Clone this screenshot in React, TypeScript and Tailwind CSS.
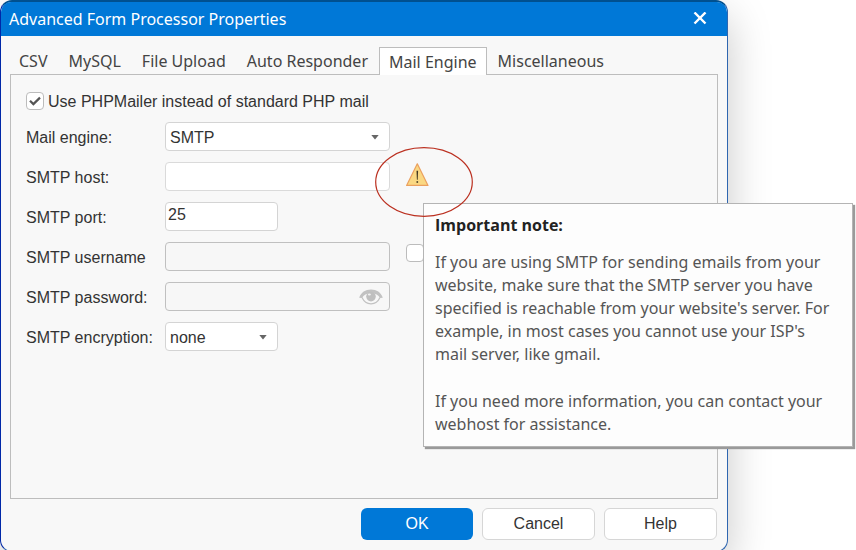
import { useState, type ReactNode } from "react";

const TABS = ["CSV", "MySQL", "File Upload", "Auto Responder", "Mail Engine", "Miscellaneous"];

const uiFont = "font-['Noto_Sans','Open_Sans',sans-serif]";
const formFont = "font-['Liberation_Sans',Arial,sans-serif]";

function CheckBox({ id, defaultChecked, label }: { id: string; defaultChecked?: boolean; label?: string }) {
  return (
    <span className="grid size-[18px] shrink-0 place-items-center">
      <input
        id={id}
        type="checkbox"
        defaultChecked={defaultChecked}
        aria-label={label}
        className="peer col-start-1 row-start-1 size-[18px] appearance-none rounded-sm border border-[#bcbcbc] bg-white"
      />
      <svg
        viewBox="0 0 18 18"
        className="pointer-events-none col-start-1 row-start-1 hidden size-[18px] peer-checked:block"
        fill="none"
        stroke="#555555"
        strokeWidth="2.2"
      >
        <path d="M4 8.7 L7.4 12.1 L14 5.6" />
      </svg>
    </span>
  );
}

function Row({ id, label, children }: { id: string; label: string; children: ReactNode }) {
  return (
    <div className="flex h-[29px] items-center">
      <label htmlFor={id} className="w-[139px] shrink-0 pt-0.5">
        {label}
      </label>
      {children}
    </div>
  );
}

function Select({ id, options, wide }: { id: string; options: string[]; wide?: boolean }) {
  return (
    <span className={`grid items-center ${wide ? "w-[225px]" : "w-[113px]"}`}>
      <select
        id={id}
        className="col-start-1 row-start-1 h-[29px] w-full appearance-none rounded-sm border border-[#d4d4d4] bg-white px-1 pt-0.5 text-[#333333]"
      >
        {options.map((o) => (
          <option key={o}>{o}</option>
        ))}
      </select>
      <svg viewBox="0 0 8 5" className="pointer-events-none col-start-1 row-start-1 mt-0.5 mr-[11px] h-[5px] w-2 justify-self-end" fill="#666666">
        <path d="M0.3 0 H7.7 L4 4.6 Z" />
      </svg>
    </span>
  );
}

function WarningNote() {
  return (
    <div className="relative ml-4 size-6 self-start">
      <svg viewBox="0 0 24 24" className="size-6" role="img" aria-label="Warning">
        <path d="M11.3 1.8 L22 23.4 H0.6 Z" fill="#fad883" stroke="#eba05f" strokeWidth="1.2" strokeLinejoin="round" />
        <path d="M10.5 8.8 H12.1 L11.7 17.8 H10.9 Z" fill="#3f3520" />
        <rect x="10.5" y="19.2" width="1.6" height="1.6" fill="#3f3520" />
      </svg>
      <div
        role="tooltip"
        className={`absolute top-[41px] left-[17px] z-10 w-[430px] border border-[#b4b4b4] bg-[#fdfdfd] px-[11px] pt-2 pb-[10px] text-base text-[#555555] shadow-[2px_2px_1px_#9a9a9a] ${uiFont}`}
      >
        <h2 className="font-['Open_Sans','Noto_Sans',sans-serif] leading-[26px] font-bold text-[#222222]">
          Important note:
        </h2>
        <p className="mt-[13px] leading-[23px]">
          If you are using SMTP for sending emails from your website, make sure that the SMTP server you have specified
          is reachable from your website's server. For example, in most cases you cannot use your ISP's mail server,
          like gmail.
        </p>
        <p className="mt-6 leading-[23px]">
          If you need more information, you can contact your webhost for assistance.
        </p>
      </div>
      <svg
        viewBox="0 0 98 70"
        className="pointer-events-none absolute top-[-15px] left-[-31px] z-20 h-[70px] w-[98px] max-w-none"
        fill="none"
        stroke="#bb3020"
        strokeWidth="1.2"
      >
        <ellipse cx="49" cy="35" rx="48.3" ry="34.3" />
      </svg>
    </div>
  );
}

function EyeIcon() {
  return (
    <svg viewBox="0 0 24 16" className="h-4 w-6">
      <path
        d="M3 8.5 C5 12.8 8.5 14.8 12 14.8 C15.5 14.8 19 12.8 21 8.5"
        fill="#f8f8f8"
        stroke="#c2c2c2"
        strokeWidth="1.2"
      />
      <path
        d="M0.2 8.8 C2 3.4 6.5 0.6 12 0.6 C17.5 0.6 22 3.4 23.8 8.8 L21 9 C19.5 6 16.500 4.2 12 4.2 C7.5 4.2 4.5 6 3 9 Z"
        fill="#c2c2c2"
      />
      <circle cx="12" cy="7.6" r="4.8" fill="#bfbfbf" />
      <ellipse cx="10.4" cy="5.6" rx="1.5" ry="1" fill="#f2f2f2" />
    </svg>
  );
}

export default function App() {
  const [active, setActive] = useState("Mail Engine");
  return (
    <div className="h-screen overflow-hidden bg-white">
      <main className="mr-32 flex min-h-[calc(100vh+2px)] flex-col rounded-[12px] border border-t-2 border-[#2f66b0] border-t-[#00508f] border-l-[#0028a8] bg-[#f8f8f8] shadow-[0_16px_44px_rgba(0,0,0,0.22)]">
        <header className="flex h-[34px] shrink-0 items-center justify-between rounded-t-[10px] bg-[#0078d7] pr-5 pl-[8px] text-white">
          <h1 className={`text-base ${uiFont}`}>Advanced Form Processor Properties</h1>
          <button aria-label="Close">
            <svg viewBox="0 0 14 14" className="size-[14px]" stroke="white" strokeWidth="2.4">
              <path d="M1.5 0.5 L12.5 11.5 M12.5 0.5 L1.5 11.5" />
            </svg>
          </button>
        </header>

        <div role="tablist" className={`mt-[11px] flex h-[27px] shrink-0 gap-px px-2 text-base text-[#444444] ${uiFont}`}>
          {TABS.map((tab) => (
            <button
              key={tab}
              role="tab"
              aria-selected={tab === active}
              onClick={() => setActive(tab)}
              className={
                tab === active
                  ? "z-10 -mb-px border border-b-0 border-[#bdbdbd] bg-white px-[9px]"
                  : "px-[10px]"
              }
            >
              {tab}
            </button>
          ))}
        </div>

        <section
          role="tabpanel"
          className={`mx-[9px] flex flex-1 flex-col gap-[11px] border border-[#bdbdbd] px-[15px] pt-[17px] text-base text-[#333333] ${formFont}`}
        >
          <div className="mb-px flex h-[18px] items-center gap-1">
            <CheckBox id="phpmailer" defaultChecked />
            <label htmlFor="phpmailer" className="pt-0.5">
              Use PHPMailer instead of standard PHP mail
            </label>
          </div>
          <Row id="engine" label="Mail engine:">
            <Select id="engine" options={["SMTP"]} wide />
          </Row>
          <Row id="host" label="SMTP host:">
            <input id="host" className="h-[29px] w-[225px] rounded-sm border border-[#dadada] bg-white px-0.5" />
            <WarningNote />
          </Row>
          <Row id="port" label="SMTP port:">
            <input
              id="port"
              defaultValue="25"
              className="h-[29px] w-[113px] rounded-sm border border-[#d4d4d4] bg-white px-0.5 pb-1"
            />
          </Row>
          <Row id="username" label="SMTP username">
            <input id="username" disabled className="h-[29px] w-[225px] rounded-sm border border-[#c0c0c0] bg-[#f7f7f7] px-0.5" />
            <span className="mt-0.5 ml-4 self-start">
              <CheckBox id="auth" label="Use authentication" />
            </span>
          </Row>
          <Row id="password" label="SMTP password:">
            <span className="flex h-[29px] w-[225px] items-center rounded-sm border border-[#c0c0c0] bg-[#f7f7f7] pr-1.5">
              <input id="password" type="password" disabled className="w-full min-w-0 flex-1 px-0.5" />
              <button aria-label="Show password">
                <EyeIcon />
              </button>
            </span>
          </Row>
          <Row id="encryption" label="SMTP encryption:">
            <Select id="encryption" options={["none", "SSL", "TLS"]} />
          </Row>
        </section>

        <footer className={`flex justify-end gap-[9px] px-[10px] pt-[9px] pb-[11px] text-base text-[#333333] ${formFont}`}>
          <button className="h-8 w-[112px] rounded-md bg-[#0078d7] text-white">OK</button>
          <button className="h-8 w-[113px] rounded-md border border-[#d6d6d6] bg-white">Cancel</button>
          <button className="h-8 w-[113px] rounded-md border border-[#d6d6d6] bg-white">Help</button>
        </footer>
      </main>
    </div>
  );
}
